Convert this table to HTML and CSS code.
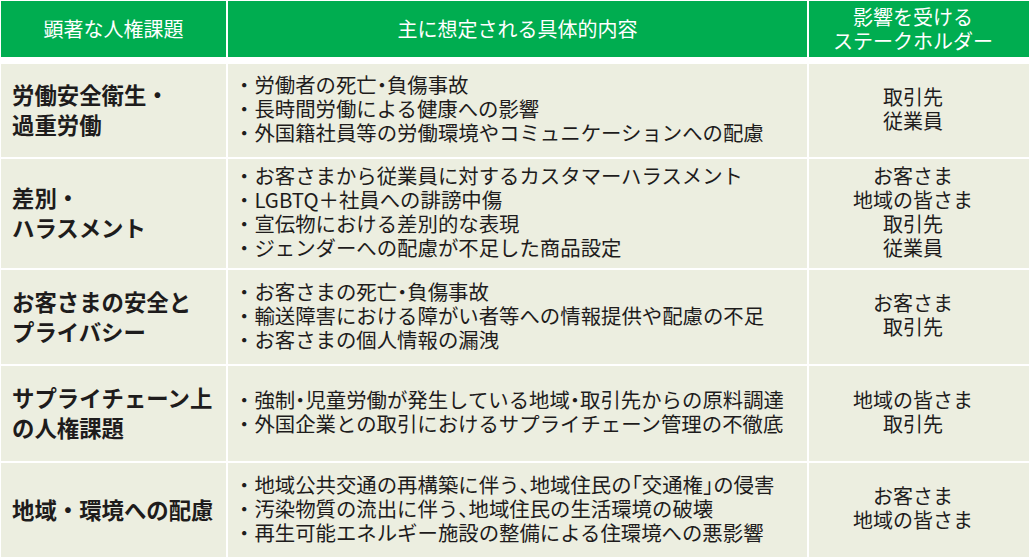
FILE: index.html
```html
<!DOCTYPE html>
<html lang="ja">
<head>
<meta charset="utf-8">
<title>顕著な人権課題</title>
<link rel="stylesheet" href="styles.css">
</head>
<body>
<div class="table">
  <div class="th">顕著な人権課題</div>
  <div class="th">主に想定される具体的内容</div>
  <div class="th th-sh">影響を受ける<br>ステークホルダー</div>

  <div class="issue">労働安全衛生・<br>過重労働</div>
  <div class="detail">
    <p>・労働者の死亡<span class="h">・</span>負傷事故</p>
    <p>・長時間労働による健康への影響</p>
    <p>・外国籍社員等の労働環境やコミュニケーションへの配慮</p>
  </div>
  <div class="sh">取引先<br>従業員</div>

  <div class="issue">差別・<br>ハラスメント</div>
  <div class="detail">
    <p>・お客さまから従業員に対するカスタマーハラスメント</p>
    <p>・LGBTQ＋社員への誹謗中傷</p>
    <p>・宣伝物における差別的な表現</p>
    <p>・ジェンダーへの配慮が不足した商品設定</p>
  </div>
  <div class="sh">お客さま<br>地域の皆さま<br>取引先<br>従業員</div>

  <div class="issue">お客さまの安全と<br>プライバシー</div>
  <div class="detail">
    <p>・お客さまの死亡<span class="h">・</span>負傷事故</p>
    <p>・輸送障害における障がい者等への情報提供や配慮の不足</p>
    <p>・お客さまの個人情報の漏洩</p>
  </div>
  <div class="sh">お客さま<br>取引先</div>

  <div class="issue">サプライチェーン上<br>の人権課題</div>
  <div class="detail">
    <p>・強制<span class="h">・</span>児童労働が発生している地域<span class="h">・</span>取引先からの原料調達</p>
    <p>・外国企業との取引におけるサプライチェーン管理の不徹底</p>
  </div>
  <div class="sh">地域の皆さま<br>取引先</div>

  <div class="issue">地域・環境への配慮</div>
  <div class="detail">
    <p>・地域公共交通の再構築に伴う<span class="h">、</span>地域住民の<span class="h">「</span>交通権<span class="h">」</span>の侵害</p>
    <p>・汚染物質の流出に伴う<span class="h">、</span>地域住民の生活環境の破壊</p>
    <p>・再生可能エネルギー施設の整備による住環境への悪影響</p>
  </div>
  <div class="sh">お客さま<br>地域の皆さま</div>
</div>
</body>
</html>
```

FILE: styles.css
```css
html, body {
  margin: 0;
  padding: 0;
  background: #ffffff;
}

body {
  font-family: "Noto Sans CJK JP", "Noto Sans", sans-serif;
  color: #1e1c1c;
}

.table {
  width: 1031px;
  height: 557px;
  box-sizing: border-box;
  padding: 1px 2px 2px 1px;
  display: grid;
  grid-template-columns: 225px 579px 1fr;
  grid-template-rows: 61px 93px 109px 94px 95px 94px;
  column-gap: 2px;
  row-gap: 2px;
  background: #ffffff;
}

.th {
  background: #00ad50;
  color: #ffffff;
  font-size: 20px;
  line-height: 24px;
  margin-bottom: 5px;
  display: flex;
  align-items: center;
  justify-content: center;
  text-align: center;
}

.th-sh {
  padding-right: 12px;
}

.issue,
.detail,
.sh {
  background: #eceee0;
  display: flex;
  flex-direction: column;
  justify-content: center;
}

.issue {
  font-size: 22.4px;
  font-weight: 700;
  line-height: 30px;
  padding-left: 11px;
  padding-bottom: 3px;
}

.detail {
  font-size: 20.4px;
  line-height: 24px;
  padding-left: 6px;
  padding-bottom: 5px;
}

.detail p {
  margin: 0;
  white-space: nowrap;
}

.sh {
  font-size: 20px;
  line-height: 24px;
  text-align: center;
  padding-right: 12px;
  padding-bottom: 4px;
}

.h {
  font-feature-settings: "halt" 1;
}
```
